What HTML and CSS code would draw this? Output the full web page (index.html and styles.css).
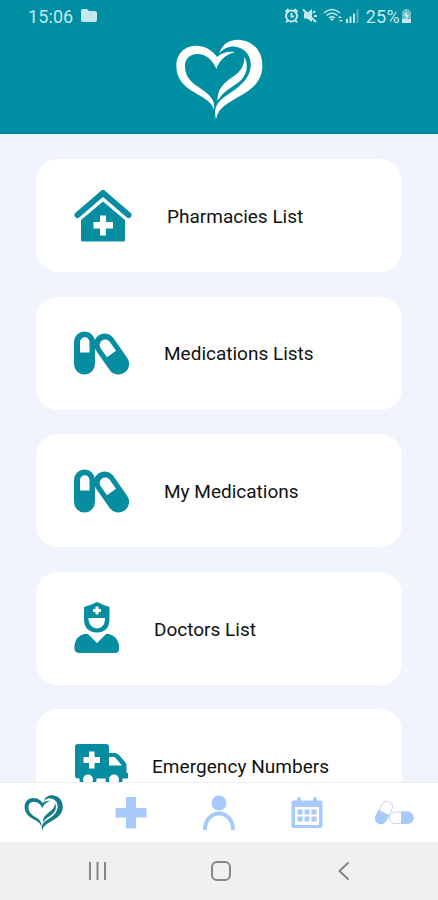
FILE: index.html
```html
<!DOCTYPE html>
<html lang="en">
<head>
    <meta charset="UTF-8">
    <meta name="viewport" content="width=device-width, initial-scale=1.0">
    <title>Home</title>
    <link rel="stylesheet" href="styles.css">
</head>
<body>
    <!-- Shared shapes -->
    <svg class="shapes" width="0" height="0">
        <symbol id="heart" viewBox="30 28 270 243">
            <path d="M154 118C162 94 178 76 211 67C187 64 168 70 157 82C139 59 118 48 93 48C57 48 34 75 34 108C34 146 56 170 86 187C118 205 140 217 147 240C152 214 136 196 112 180C80 160 60 143 60 110C60 87 74 74 96 73C124 73 144 92 154 118Z"/>
            <path d="M163 71C171 45 191 30 218 30C263 31 292 63 292 108C292 151 265 176 229 197C188 221 160 233 153 269C145 240 154 219 178 202C213 178 252 155 257 112C260 79 242 56 211 51C192 49 175 57 163 71Z"/>
            <path d="M238 81C252 109 246 136 223 156C201 173 175 184 158 213C156 184 171 166 193 149C219 130 239 117 238 81Z"/>
        </symbol>
        <symbol id="pills" viewBox="0 0 56 44">
            <path fill-rule="evenodd" d="M0 11A10.5 10.5 0 0 1 21 11V33A10.5 10.5 0 0 1 0 33ZM6 21.5H15.5V11A4.75 4.75 0 0 0 6 11Z"/>
            <path fill-rule="evenodd" transform="translate(37.5 23) rotate(-35)" d="M-10.7 -12A10.7 10.7 0 0 1 10.7 -12V12A10.7 10.7 0 0 1 -10.7 12ZM-5.500 0H5.500V-11A5.500 5.500 0 0 0 -5.500 -11Z"/>
        </symbol>
    </svg>

    <header>
        <div class="status">
            <span class="time">15:06</span>
            <svg class="folder" width="16" height="14" viewBox="0 0 16 14"><path d="M2 0H6L8 2H14Q16 2 16 4V11Q16 13 14 13H2Q0 13 0 11V2Q0 0 2 0Z"/></svg>
            <svg class="signals" width="76" height="18" viewBox="0 0 76 18">
                <path class="clock" d="M7.500 3.500A5.500 5.500 0 1 0 7.500 14.500A5.500 5.500 0 1 0 7.500 3.500ZM7.500 6V9.500H10M1.500 5L4.500 2M10.500 2L13.500 5M3.500 13.500L2 15.500M11.500 13.500L13 15.500"/>
                <path d="M20 6H23L28 2V15L23 11.500H20Z"/>
                <path class="line" d="M19 2.500L32 15M29 6L31 4M30 9H33"/>
                <path class="thin" d="M40 6Q48 -1 56 6M42.500 8.500Q48 4 53.500 8.500M45 11Q48 8.500 51 11"/>
                <path d="M46 12L48 14L50 12Q48 10.500 46 12ZM54 11L56 9L58 11ZM57 15L55 13H59Z"/>
                <path d="M62 12H64V16H62ZM65.500 9.500H67.500V16H65.500ZM69 6.500H71V16H69Z"/>
                <path opacity=".4" d="M72.500 2.500H74.500V16H72.500Z"/>
            </svg>
            <span class="percent">25%</span>
            <svg class="battery" width="11" height="16" viewBox="0 0 11 16">
                <path opacity=".55" d="M3 1H8V3H10V14H1V3H3Z"/>
                <path d="M5.500 3L3 8H5L4.500 11H1V15H10V11H6L8 6.500H6Z"/>
            </svg>
        </div>
        <svg class="logo" width="90" height="81"><use href="#heart"/></svg>
    </header>

    <main>
        <section class="card pharmacies">
            <svg width="58" height="52" viewBox="0 0 58 52">
                <path class="roof" d="M3.500 25L29 3L54.500 25"/>
                <path fill-rule="evenodd" d="M29 11.500L51 30V50Q51 51.500 49.500 51.500H8.500Q7 51.500 7 50V30ZM26 25.500V32H19.500V38.500H26V45.500H32V38.500H39V32H32V25.500Z"/>
            </svg>
            <p>Pharmacies List</p>
        </section>
        <section class="card medications">
            <svg width="56" height="44"><use href="#pills"/></svg>
            <p>Medications Lists</p>
        </section>
        <section class="card my-medications">
            <svg width="56" height="44"><use href="#pills"/></svg>
            <p>My Medications</p>
        </section>
        <section class="card doctors">
            <svg width="46" height="52" viewBox="0 0 46 52">
                <path fill-rule="evenodd" d="M10 5Q17 3 23 0Q29 3 35.500 5V17Q35.500 30 23 30.500Q10 30 10 17ZM14.500 16V18Q16 26 23 26.500Q30 26 31 18V16ZM21.500 4.500V7H19V10H21.500V12.500H24.500V10H27V7H24.500V4.500Z"/>
                <path d="M10 32H14L23 41L32 32H35Q43 34 45 43V47Q45 51 41 51H5Q1 51 .5 47V43Q2 34 10 32Z"/>
            </svg>
            <p>Doctors List</p>
        </section>
        <section class="card emergency">
            <svg width="54" height="44" viewBox="0 0 54 44">
                <path fill-rule="evenodd" d="M4 0H32Q35 0 35 3V9H41Q43 9 44.500 10.500L51.500 18.500Q52.500 20 52.500 21.500V29H54V34.500H4Q1 34.500 1 31.500V3Q1 0 4 0ZM35 13V21.500H48L41.500 14Q41 13 40 13ZM15 7.500V13H9.500V19H15V24.500H20.500V19H26V13H20.500V7.500Z"/>
                <circle cx="14" cy="35.500" r="8.500"/><circle cx="40" cy="35.500" r="8.500"/>
                <circle class="hub" cx="14" cy="35.500" r="5"/><circle class="hub" cx="40" cy="35.500" r="5"/>
            </svg>
            <p>Emergency Numbers</p>
        </section>
    </main>

    <nav>
        <a class="active"><svg width="40" height="36"><use href="#heart"/></svg></a>
        <a><svg width="32" height="32" viewBox="0 0 32 32"><path d="M11 0H21V11H31.500V20.500H21V31.500H11V20.500H.5V11H11Z"/></svg></a>
        <a>
            <svg width="32" height="36" viewBox="0 0 32 36">
                <circle cx="16" cy="8" r="7.500"/>
                <path class="shoulders" d="M2 35C2 13 30 13 30 35"/>
            </svg>
        </a>
        <a>
            <svg width="32" height="32" viewBox="0 0 32 32">
                <path fill-rule="evenodd" d="M2 3.500H29.500Q31.500 3.500 31.500 5.500V29Q31.500 31 29.500 31H2.500Q.5 31 .5 29V5.500Q.5 3.500 2 3.500ZM4 10V28H28V10Z"/>
                <rect x="6" y="0" width="4" height="8" rx="2"/><rect x="22" y="0" width="4" height="8" rx="2"/>
                <path d="M6.500 12.500H11.500V17.500H6.500ZM13.500 12.500H18.500V17.500H13.500ZM20.500 12.500H25.500V17.500H20.500ZM6.500 19.500H11.500V24.500H6.500ZM13.500 19.500H18.500V24.500H13.500ZM20.500 19.500H25.500V24.500H20.500Z"/>
            </svg>
        </a>
        <a>
            <svg width="40" height="26" viewBox="0 0 40 26">
                <g transform="translate(10 12.500) rotate(28)">
                    <rect class="outline" x="-5.500" y="-12" width="11" height="24" rx="5.500"/>
                    <path d="M-6 0H6V6.500A6 6 0 0 1 -6 6.500Z"/>
                </g>
                <rect class="outline" x="15.500" y="12" width="23.500" height="11.500" rx="5.500"/>
                <path d="M27 11.500H33.500A6 6 0 0 1 33.500 24H27Z"/>
            </svg>
        </a>
    </nav>

    <footer>
        <svg width="20" height="20" viewBox="0 0 20 20"><path d="M2 1V19M9.500 1V19M17 1V19"/></svg>
        <svg width="20" height="20" viewBox="0 0 20 20"><rect x="1" y="1" width="18" height="18" rx="5"/></svg>
        <svg width="20" height="20" viewBox="0 0 20 20"><path d="M14.500 1.500L5.500 10L14.500 18.500"/></svg>
    </footer>
</body>
</html>
```
FILE: styles.css
```css
/* Basic Styles */
body {
    font-family: Roboto, sans-serif;
    background-color: #f0f5fd;
    margin: 0;
    height: 900px;
    display: flex;
    flex-direction: column;
    overflow: hidden;
}

svg {
    display: block;
    flex-shrink: 0;
}

.shapes {
    position: absolute;
}

header {
    background-color: #008ea2;
    height: 133px;
    border-bottom: 1px solid #087d92;
    flex-shrink: 0;
}

.status {
    height: 32px;
    padding: 0 26px 0 28px;
    display: flex;
    align-items: center;
    color: #c3e8ed;
    fill: #c3e8ed;
    font-size: 18px;
}

.time {
    letter-spacing: 0.1px;
}

.folder {
    margin-left: 8px;
}

.signals {
    margin-left: auto;
}

.signals .line,
.signals .clock,
.signals .thin {
    fill: none;
    stroke: #c3e8ed;
    stroke-width: 2;
}

.signals .thin {
    stroke-width: 1.5;
}

.percent {
    margin-left: 6px;
    letter-spacing: 0.3px;
}

.battery {
    margin-left: 1px;
}

.logo {
    fill: white;
    margin: 7px auto 0;
    padding-left: 1px;
}

/* Menu cards */
main {
    flex: 1;
    min-height: 0;
    overflow: hidden;
    padding: 25px 36px 0;
    display: flex;
    flex-direction: column;
    gap: 24.5px;
}

.card {
    height: 113px;
    flex-shrink: 0;
    box-sizing: border-box;
    padding-left: 38px;
    background-color: white;
    border-radius: 22px;
    display: flex;
    align-items: center;
    fill: #078da0;
}

.card p {
    margin: 2px 0 0 35px;
    font-size: 19px;
    color: #111;
}

.roof {
    fill: none;
    stroke: #078da0;
    stroke-width: 6;
    stroke-linecap: round;
    stroke-linejoin: round;
}

.medications p,
.my-medications p {
    margin: 1px 0 0 34px;
}

.doctors p {
    margin-left: 34px;
}

.emergency p {
    margin-left: 24px;
    letter-spacing: 0.05px;
}

.hub {
    fill: white;
}

/* Bottom tabs */
nav {
    height: 60px;
    flex-shrink: 0;
    box-sizing: border-box;
    border-top: 1px solid #eeeff1;
    background-color: white;
    display: grid;
    grid-template-columns: repeat(5, 1fr);
    align-items: center;
    justify-items: center;
    fill: #a8cafa;
}

nav .active {
    fill: #137c8b;
}

.shoulders {
    fill: none;
    stroke: #a8cafa;
    stroke-width: 4;
}

.outline {
    fill: white;
    stroke: #ccd6e8;
    stroke-width: 1;
}

footer {
    height: 58px;
    flex-shrink: 0;
    box-sizing: border-box;
    padding-left: 4px;
    background-color: #f0f0f0;
    display: flex;
    align-items: center;
    justify-content: center;
    gap: 103px;
    fill: none;
    stroke: #858585;
    stroke-width: 2;
}
```
